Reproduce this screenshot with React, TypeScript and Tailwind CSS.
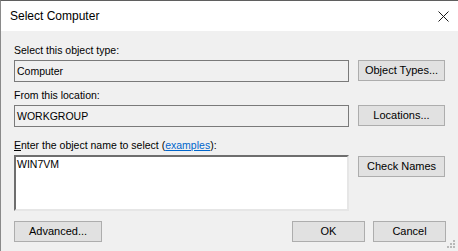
import React, { useState } from "react";

const font = { fontFamily: '"Liberation Sans", Arial, sans-serif' };

const WinButton: React.FC<{ label: React.ReactNode; className?: string }> = ({
  label,
  className,
}) => (
  <button
    className={`h-[21px] border border-[#adadad] bg-[#e1e1e1] text-[11px] leading-[19px] text-black ${className ?? ""}`}
  >
    {label}
  </button>
);

const CloseIcon = () => (
  <svg width="11" height="11" viewBox="0 0 11 11">
    <path d="M0.5 0.5 L10.5 10.5 M10.5 0.5 L0.5 10.5" stroke="#1a1a1a" strokeWidth="1" />
  </svg>
);

const SizeGrip = () => (
  <svg width="8" height="8" viewBox="0 0 8 8">
    {[
      [6, 0],
      [6, 3],
      [3, 3],
      [6, 6],
      [3, 6],
      [0, 6],
    ].map(([x, y]) => (
      <rect key={`${x}-${y}`} x={x} y={y} width="2" height="2" fill="#b8b8b8" />
    ))}
  </svg>
);

export default function App() {
  const [name, setName] = useState("WIN7VM");

  return (
    <div
      className="w-[458px] h-[251px] overflow-hidden border-t border-l border-t-[#5f5f5f] border-l-[#8a8a8a] bg-[#f0f0f0] text-black flex flex-col"
      style={font}
    >
      {/* title bar */}
      <div className="h-[30px] bg-white flex items-center justify-between pl-[9px] pr-[9px]">
        <span className="text-[12px]">Select Computer</span>
        <CloseIcon />
      </div>

      {/* body */}
      <div className="relative flex-1 flex flex-col pl-[13px] pr-[12px] pt-[12px] text-[10.5px]">
        <div className="h-[14px] leading-[14px]">Select this object type:</div>
        <div className="mt-[3px] flex gap-[9px]">
          <div className="w-[335px] h-[22px] border border-[#7a7a7a] bg-[#f0f0f0] px-[2px] leading-[20px]">
            Computer
          </div>
          <WinButton label="Object Types..." className="w-[87px]" />
        </div>

        <div className="mt-[6px] h-[14px] leading-[14px]">From this location:</div>
        <div className="mt-[3px] flex gap-[9px]">
          <div className="w-[335px] h-[22px] border border-[#7a7a7a] bg-[#f0f0f0] px-[2px] leading-[20px]">
            WORKGROUP
          </div>
          <WinButton label="Locations..." className="w-[87px]" />
        </div>

        <div className="mt-[11px] h-[14px] leading-[14px]">
          <span className="underline">E</span>nter the object name to select (
          <span className="text-[#0066cc] underline">examples</span>):
        </div>
        <div className="mt-[3px] flex gap-[9px] items-start">
          <textarea
            value={name}
            onChange={(e) => setName(e.target.value)}
            className="w-[335px] h-[56px] resize-none bg-white border-2 border-t-[#6e6e6e] border-l-[#6e6e6e] border-r-[#e6e6e6] border-b-[#e6e6e6] px-[1px] pt-0 text-[10.5px] leading-[14px] outline-none"
            style={font}
          />
          <WinButton label="Check Names" className="w-[87px] mt-[1px]" />
        </div>

        <div className="mt-[10px] flex items-center">
          <WinButton label="Advanced..." className="w-[88px]" />
          <div className="flex-1" />
          <div className="flex gap-[8px]">
            <WinButton label="OK" className="w-[73px]" />
            <WinButton label="Cancel" className="w-[73px]" />
          </div>
        </div>

        <div className="absolute right-[3px] bottom-[3px]">
          <SizeGrip />
        </div>
      </div>
    </div>
  );
}
